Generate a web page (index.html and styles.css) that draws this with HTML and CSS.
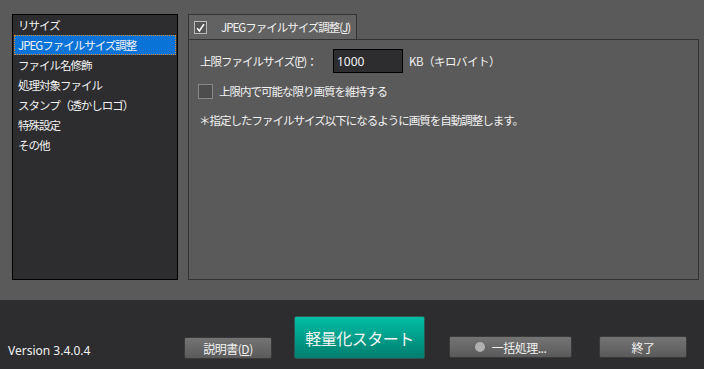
FILE: index.html
```html
<!DOCTYPE html>
<html lang="ja">
  <head>
    <meta charset="UTF-8" />
    <title>JPEG軽量化</title>
    <link rel="stylesheet" href="styles.css">
  </head>
  <body>
    <div class="main">
      <ul class="menu">
        <li>リサイズ</li>
        <li class="selected">JPEGファイルサイズ調整</li>
        <li>ファイル名修飾</li>
        <li>処理対象ファイル</li>
        <li>スタンプ（透かしロゴ）</li>
        <li>特殊設定</li>
        <li>その他</li>
      </ul>
      <div class="settings">
        <div class="tab">
          <span class="tab-check">
            <svg width="12" height="12" viewBox="0 0 12 12">
              <path d="M2.3 6.3 L4.8 9.2 L9.8 1.8" fill="none" stroke="#fff" stroke-width="1.8" />
            </svg>
          </span>
          <span>JPEGファイルサイズ調整(<u>J</u>)</span>
        </div>
        <div class="panel">
          <div class="row">
            <label for="limit">上限ファイルサイズ(<u>P</u>)：</label>
            <input id="limit" type="text" value="1000" />
            <span class="unit">KB（キロバイト）</span>
          </div>
          <div class="row check-row">
            <span class="box"></span>
            <span>上限内で可能な限り画質を維持する</span>
          </div>
          <p class="note">＊指定したファイルサイズ以下になるように画質を自動調整します。</p>
        </div>
      </div>
    </div>
    <div class="footer">
      <span class="version">Version 3.4.0.4</span>
      <button class="btn btn-help">説明書(<u>D</u>)</button>
      <button class="btn-start">軽量化スタート</button>
      <button class="btn btn-batch"><span class="dot"></span>一括処理...</button>
      <button class="btn btn-exit">終了</button>
    </div>
  </body>
</html>
```

FILE: styles.css
```css
html,
body {
  margin: 0;
  padding: 0;
}
body {
  width: 704px;
  height: 369px;
  overflow: hidden;
  background: #5a5a5a;
  color: #f2f2f2;
  font-family: "Noto Sans CJK JP", "Noto Sans", sans-serif;
  font-size: 11.5px;
  letter-spacing: -1px;
  white-space: nowrap;
}
u {
  text-decoration: underline;
  text-underline-offset: 1px;
}
.main {
  display: flex;
  gap: 10px;
  height: 300px;
  box-sizing: border-box;
  padding: 14px 5px 0 12px;
}
.menu {
  list-style: none;
  margin: 0;
  padding: 0 1px;
  width: 166px;
  height: 266px;
  box-sizing: border-box;
  border: 1px solid #000;
  background: #2d2d2f;
}
.menu li {
  height: 20px;
  line-height: 20px;
  padding-left: 4px;
}
.menu li.selected {
  background: #0a73d8;
  outline: 1px dotted #e08a2a;
  outline-offset: -1px;
}
.settings {
  flex: 1;
  display: flex;
  flex-direction: column;
}
.tab {
  display: flex;
  align-items: center;
  gap: 14px;
  width: 169px;
  height: 25px;
  box-sizing: border-box;
  padding-left: 5px;
  background: #626262;
  border: 1px solid #333;
  border-bottom: none;
}
.tab-check {
  display: flex;
  width: 11px;
  height: 11px;
  border: 1px solid #bbb;
  background: #555;
}
.panel {
  height: 241px;
  box-sizing: border-box;
  border: 1px solid #333;
  padding: 9px 0 0 11px;
}
.row {
  display: flex;
  align-items: center;
}
label {
  width: 133px;
}
input {
  width: 70px;
  height: 24px;
  box-sizing: border-box;
  border: 1px solid #000;
  background: #2d2d2f;
  color: #f2f2f2;
  font-family: "Noto Sans", sans-serif;
  font-size: 12px;
  letter-spacing: 0;
  padding: 0 3px;
  margin-right: 6px;
}
.unit {
  letter-spacing: -0.5px;
}
.check-row {
  margin-top: 10px;
  margin-left: -2px;
  gap: 6px;
}
.box {
  width: 13px;
  height: 13px;
  border: 1px solid #888;
  background: #4d4d4d;
}
.note {
  margin: 13px 0 0 -1px;
}
.footer {
  display: flex;
  align-items: flex-end;
  height: 69px;
  box-sizing: border-box;
  padding: 0 0 9px 8px;
  background: #2d2d2f;
}
.version {
  width: 176px;
  margin-bottom: 1px;
  font-family: "Noto Sans", sans-serif;
  font-size: 12px;
  letter-spacing: 0;
}
.btn {
  height: 22px;
  box-sizing: border-box;
  border: 1px solid #3a3a3a;
  border-radius: 2px;
  background: linear-gradient(#747474, #5a5a5a);
  color: #f2f2f2;
  font-family: inherit;
  font-size: 12px;
  letter-spacing: -0.5px;
  padding: 0;
  display: flex;
  align-items: center;
  justify-content: center;
}
.btn-help {
  width: 88px;
  margin-bottom: 1px;
}
.btn-start {
  width: 131px;
  height: 43px;
  margin: 0 24px 1px 22px;
  border: 1px solid #2a5a52;
  border-radius: 2px;
  background: linear-gradient(#02bfa6, #017d6e);
  color: #f4f4f4;
  font-family: inherit;
  font-size: 16px;
  letter-spacing: -0.5px;
}
.btn-batch {
  width: 123px;
  margin-right: 27px;
  margin-bottom: 2px;
}
.dot {
  width: 10px;
  height: 10px;
  border-radius: 50%;
  background: #b0b0b0;
  margin-right: 7px;
}
.btn-exit {
  width: 88px;
  margin-bottom: 2px;
}
```
